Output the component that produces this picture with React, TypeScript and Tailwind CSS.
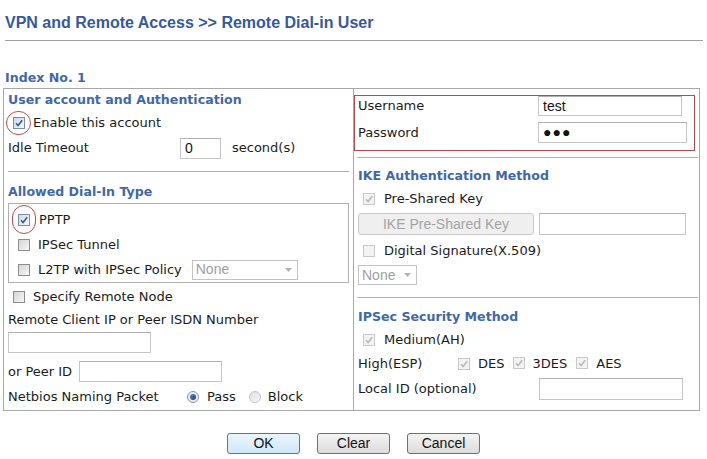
import React from 'react';

type CheckProps = {
  checked?: boolean;
  disabled?: boolean;
  circle?: 'round' | 'tall';
};

const Check: React.FC<CheckProps> = ({ checked, disabled, circle }) => (
  <span className="relative inline-flex shrink-0">
    <span
      className={`flex w-[12px] h-[12px] items-center justify-center border ${
        disabled
          ? 'border-[#c9c9c9] bg-[#f3f3f3]'
          : checked
          ? 'border-[#7f8c9c] bg-gradient-to-br from-[#cfd8e6] to-[#f6f8fb]'
          : 'border-[#8d8d8d] bg-gradient-to-br from-[#d4d4d4] to-[#f7f7f7]'
      }`}
    >
      {checked && (
        <svg width="10" height="10" viewBox="0 0 10 10">
          <path
            d="M2 5.2 L4.1 7.6 L8.2 2.2"
            fill="none"
            stroke={disabled ? '#b9b9b9' : '#3d5a96'}
            strokeWidth="1.6"
          />
        </svg>
      )}
    </span>
    {circle === 'round' && (
      <span className="absolute left-[-7px] top-[-6px] w-[25px] h-[24px] rounded-full border border-[#b5504f]" />
    )}
    {circle === 'tall' && (
      <span className="absolute left-[-6px] top-[-9px] w-[24px] h-[29px] rounded-full border border-[#b5504f]" />
    )}
  </span>
);

const Radio: React.FC<{ checked?: boolean }> = ({ checked }) => (
  <span
    className={`flex w-[12px] h-[12px] items-center justify-center rounded-full border ${
      checked ? 'border-[#8a96a6] bg-[#e8edf4]' : 'border-[#c4c4c4] bg-gradient-to-br from-[#dedede] to-[#f8f8f8]'
    }`}
  >
    {checked && <span className="w-[6px] h-[6px] rounded-full bg-gradient-to-br from-[#5d8ac4] to-[#1d3f74]" />}
  </span>
);

const Input: React.FC<{ w: string; h?: string; value?: string; className?: string }> = ({
  w,
  h = 'h-[21px]',
  value,
  className = '',
}) => (
  <span
    className={`flex items-center ${w} ${h} border border-[#c6c6c6] border-t-[#b0b0b0] bg-white pl-[4px] font-['Liberation_Sans',Arial,sans-serif] text-[14px] text-[#111] ${className}`}
  >
    {value}
  </span>
);

const SelectBox: React.FC<{ w: string; className?: string }> = ({ w, className = '' }) => (
  <span
    className={`flex items-center justify-between ${w} h-[20px] border border-[#c3c3c3] bg-white pl-[3px] pr-[5px] font-['Liberation_Sans',Arial,sans-serif] text-[14px] text-[#a0a0a0] ${className}`}
  >
    None
    <svg width="7" height="4" viewBox="0 0 7 4">
      <path d="M0 0 L7 0 L3.5 4 Z" fill="#b3b3b3" />
    </svg>
  </span>
);

const Heading: React.FC<{ children: React.ReactNode; className?: string }> = ({ children, className = '' }) => (
  <div className={`h-[16px] leading-[16px] font-bold text-[12.6px] text-[#3f69a6] ${className}`}>{children}</div>
);

const Button: React.FC<{ label: string; focused?: boolean }> = ({ label, focused }) => (
  <button
    className={`flex items-center justify-center h-[21px] w-[73px] rounded-[3px] border font-['Liberation_Sans',Arial,sans-serif] text-[14px] text-[#111] ${
      focused
        ? 'border-[#3d7fb4] bg-gradient-to-b from-[#eaf6fd] to-[#cfe7f7]'
        : 'border-[#707070] bg-gradient-to-b from-[#f4f4f4] to-[#dcdcdc]'
    }`}
  >
    {label}
  </button>
);

export default function App() {
  return (
    <div className="w-[707px] h-[459px] bg-white font-['DejaVu_Sans',Verdana,sans-serif] text-[13px] text-[#1b1b1b]">
      <h1 className="pt-[13px] pl-[5px] h-[32px] leading-[20px] font-['Liberation_Sans',Arial,sans-serif] font-bold text-[16px] text-[#36599a]">
        VPN and Remote Access &gt;&gt; Remote Dial-in User
      </h1>
      <div className="mt-[8px] ml-[5px] w-[698px] border-t border-[#a0a0a0]" />

      <div className="mt-[29px] ml-[5px] h-[16px] leading-[16px] font-bold text-[12.6px] text-[#3f69a6]">
        Index No. 1
      </div>

      {/* main table */}
      <div className="mt-[2px] ml-[3px] w-[697px] h-[323px] border border-[#a8a8a8] grid grid-cols-[349px_1fr]">
        {/* left column */}
        <div className="flex flex-col">
          <Heading className="mt-[3px] pl-[4px]">User account and Authentication</Heading>
          <div className="mt-[4px] h-[22px] flex items-center pl-[9px] gap-[8px]">
            <Check checked circle="round" />
            <span>Enable this account</span>
          </div>
          <div className="mt-[3px] h-[22px] flex items-center pl-[4px]">
            <span className="w-[172px]">Idle Timeout</span>
            <Input w="w-[41px]" value="0" />
            <span className="ml-[11px]">second(s)</span>
          </div>
          <div className="mt-[12px] mx-[4px] border-t border-[#b0b0b0]" />
          <Heading className="mt-[12px] pl-[4px]">Allowed Dial-In Type</Heading>
          <div className="mt-[3px] mx-[4px] border border-[#b0b0b0] pt-[3px] flex flex-col">
            <div className="h-[25px] flex items-center pl-[9px] gap-[9px]">
              <Check checked circle="tall" />
              <span>PPTP</span>
            </div>
            <div className="h-[25px] flex items-center pl-[9px] gap-[8px]">
              <Check />
              <span>IPSec Tunnel</span>
            </div>
            <div className="h-[25px] flex items-center pl-[9px] gap-[8px]">
              <Check />
              <span>L2TP with IPSec Policy</span>
              <SelectBox w="w-[106px]" className="ml-[2px]" />
            </div>
          </div>
          <div className="h-[27px] flex items-center pl-[9px] gap-[8px]">
            <Check />
            <span>Specify Remote Node</span>
          </div>
          <div className="h-[20px] flex items-center pl-[4px]">Remote Client IP or Peer ISDN Number</div>
          <div className="mt-[2px] pl-[4px]">
            <Input w="w-[143px]" />
          </div>
          <div className="mt-[8px] h-[21px] flex items-center pl-[4px]">
            <span className="w-[71px]">or Peer ID</span>
            <Input w="w-[143px]" />
          </div>
          <div className="mt-[4px] h-[22px] flex items-center pl-[4px]">
            <span className="w-[179px]">Netbios Naming Packet</span>
            <Radio checked />
            <span className="ml-[8px]">Pass</span>
            <span className="ml-[13px]">
              <Radio />
            </span>
            <span className="ml-[7px]">Block</span>
          </div>
        </div>

        {/* right column */}
        <div className="border-l border-[#a8a8a8] flex flex-col">
          <div className="mt-[6px] w-[341px] h-[56px] border border-[#b44a4a] flex flex-col pl-[3px]">
            <div className="h-[20px] flex items-center">
              <span className="w-[180px]">Username</span>
              <Input w="w-[144px]" h="h-[20px]" value="test" />
            </div>
            <div className="mt-[6px] h-[21px] flex items-center">
              <span className="w-[180px]">Password</span>
              <Input w="w-[149px]" value="●●●" className="text-[12px] tracking-[1px]" />
            </div>
          </div>
          <div className="mt-[6px] ml-[3px] mr-[1px] border-t border-[#b0b0b0]" />
          <Heading className="mt-[10px] pl-[4px]">IKE Authentication Method</Heading>
          <div className="mt-[4px] h-[22px] flex items-center pl-[9px] gap-[9px]">
            <Check checked disabled />
            <span>Pre-Shared Key</span>
          </div>
          <div className="mt-[3px] h-[22px] flex items-center pl-[4px]">
            <span className="flex items-center justify-center w-[176px] h-[22px] rounded-[3px] border border-[#cacaca] bg-[#efefef] font-['Liberation_Sans',Arial,sans-serif] text-[14px] text-[#a3a3a3]">
              IKE Pre-Shared Key
            </span>
            <Input w="w-[147px]" h="h-[22px]" className="ml-[5px]" />
          </div>
          <div className="mt-[5px] h-[22px] flex items-center pl-[9px] gap-[9px]">
            <Check disabled />
            <span>Digital Signature(X.509)</span>
          </div>
          <div className="mt-[3px] pl-[4px]">
            <SelectBox w="w-[59px]" />
          </div>
          <div className="mt-[12px] ml-[3px] mr-[1px] border-t border-[#b0b0b0]" />
          <Heading className="mt-[11px] pl-[4px]">IPSec Security Method</Heading>
          <div className="mt-[4px] h-[22px] flex items-center pl-[9px] gap-[9px]">
            <Check checked disabled />
            <span>Medium(AH)</span>
          </div>
          <div className="mt-[2px] h-[22px] flex items-center pl-[4px]">
            <span className="w-[100px]">High(ESP)</span>
            <Check checked disabled />
            <span className="ml-[8px]">DES</span>
            <span className="ml-[9px]">
              <Check checked disabled />
            </span>
            <span className="ml-[7px]">3DES</span>
            <span className="ml-[9px]">
              <Check checked disabled />
            </span>
            <span className="ml-[8px]">AES</span>
          </div>
          <div className="mt-[3px] h-[22px] flex items-center pl-[4px]">
            <span className="w-[181px]">Local ID (optional)</span>
            <Input w="w-[144px]" h="h-[22px]" />
          </div>
        </div>
      </div>

      <div className="mt-[22px] flex justify-center gap-[17px]">
        <Button label="OK" focused />
        <Button label="Clear" />
        <Button label="Cancel" />
      </div>
    </div>
  );
}
